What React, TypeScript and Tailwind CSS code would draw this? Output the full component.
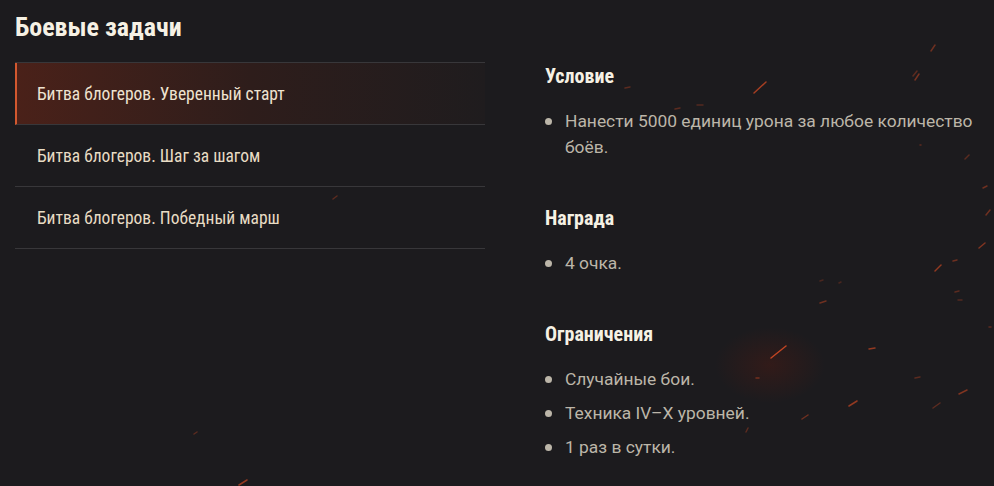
import React from 'react';

const tasks = [
  'Битва блогеров. Уверенный старт',
  'Битва блогеров. Шаг за шагом',
  'Битва блогеров. Победный марш',
];

const sections: Array<{ title: string; items: string[] }> = [
  { title: 'Условие', items: ['Нанести 5000 единиц урона за любое количество боёв.'] },
  { title: 'Награда', items: ['4 очка.'] },
  { title: 'Ограничения', items: ['Случайные бои.', 'Техника IV–X уровней.', '1 раз в сутки.'] },
];

// x1, y1, x2, y2, opacity
const sparks: Array<[number, number, number, number, number]> = [
  [931, 51, 935, 45, 0.45],
  [915, 80, 919, 74, 0.5],
  [754, 93, 766, 82, 0.75],
  [625, 88, 630, 87, 0.35],
  [675, 109, 680, 108, 0.35],
  [697, 105, 703, 105, 0.3],
  [913, 76, 917, 71, 0.35],
  [920, 145, 921, 145, 0.35],
  [965, 159, 969, 155, 0.35],
  [983, 188, 987, 186, 0.45],
  [986, 215, 990, 210, 0.45],
  [979, 248, 985, 243, 0.55],
  [935, 271, 941, 265, 0.65],
  [953, 261, 957, 260, 0.45],
  [820, 281, 823, 280, 0.25],
  [839, 283, 841, 282, 0.25],
  [820, 303, 826, 301, 0.45],
  [955, 292, 959, 291, 0.35],
  [958, 300, 962, 300, 0.3],
  [989, 327, 991, 327, 0.35],
  [869, 349, 875, 348, 0.65],
  [771, 358, 786, 346, 0.9],
  [756, 378, 759, 378, 0.45],
  [915, 378, 920, 377, 0.35],
  [959, 394, 967, 390, 0.55],
  [849, 406, 857, 401, 0.65],
  [933, 408, 940, 403, 0.35],
  [802, 419, 808, 415, 0.45],
  [746, 432, 748, 428, 0.35],
  [194, 434, 197, 432, 0.35],
  [239, 485, 247, 480, 0.65],
  [333, 199, 337, 196, 0.35],
  [25, 108, 32, 103, 0.45],
];

const Sparks: React.FC = () => (
  <svg className="pointer-events-none absolute inset-0" width={994} height={486}>
    <defs>
      <radialGradient id="glow" cx="50%" cy="50%" r="50%">
        <stop offset="0%" stopColor="#5a1a10" stopOpacity="0.35" />
        <stop offset="100%" stopColor="#5a1a10" stopOpacity="0" />
      </radialGradient>
    </defs>
    <ellipse cx={770} cy={365} rx={55} ry={38} fill="url(#glow)" />
    {sparks.map(([x1, y1, x2, y2, o], i) => (
      <line
        key={i}
        x1={x1}
        y1={y1}
        x2={x2}
        y2={y2}
        stroke="#d24a24"
        strokeWidth={1.5}
        strokeLinecap="round"
        opacity={o}
      />
    ))}
  </svg>
);

const cond = "font-['Roboto_Condensed','Liberation_Sans_Narrow','DejaVu_Sans_Condensed',sans-serif]";

const App: React.FC = () => {
  return (
    <div className="relative h-[486px] w-[994px] overflow-hidden bg-[#1c1b1e] font-['Roboto',sans-serif]">
      <Sparks />
      <div className="relative flex">
        <div className="w-[485px] pl-[15px]">
          <h1 className={`pt-[11px] text-[26px] leading-[32px] font-bold text-[#f6f1e4] ${cond}`}>
            Боевые задачи
          </h1>
          <ul className="mt-[19px] border-t border-[#38373a]">
            {tasks.map((t, i) => (
              <li
                key={t}
                className={
                  i === 0
                    ? `flex h-[62px] items-center border-b border-l-2 border-[#38373a] border-l-[#d2582f] bg-gradient-to-r from-[#4a2119] via-[#2e1d1b] to-[#1f1c1e] pl-[20px] text-[17.5px] text-[#efe3d0] ${cond}`
                    : `flex h-[62px] items-center border-b border-[#38373a] pl-[22px] text-[17.5px] text-[#e8dcc4] ${cond}`
                }
              >
                <span className="mt-[1px]">{t}</span>
              </li>
            ))}
          </ul>
        </div>
        <div className="ml-[60px] w-[440px] pt-[64px]">
          {sections.map((s) => (
            <div key={s.title} className="mb-[46px]">
              <h2 className={`text-[20px] leading-[24px] font-bold text-[#f6f1e4] ${cond}`}>
                {s.title}
              </h2>
              <ul className="mt-[20px] flex flex-col gap-[8px]">
                {s.items.map((it) => (
                  <li key={it} className="flex text-[17.4px] leading-[26px] text-[#bcb6a9]">
                    <span className="mt-[10px] mr-[13px] h-[7px] w-[7px] shrink-0 rounded-full bg-[#bcb6a9]" />
                    <span>{it}</span>
                  </li>
                ))}
              </ul>
            </div>
          ))}
        </div>
      </div>
    </div>
  );
};

export default App;
